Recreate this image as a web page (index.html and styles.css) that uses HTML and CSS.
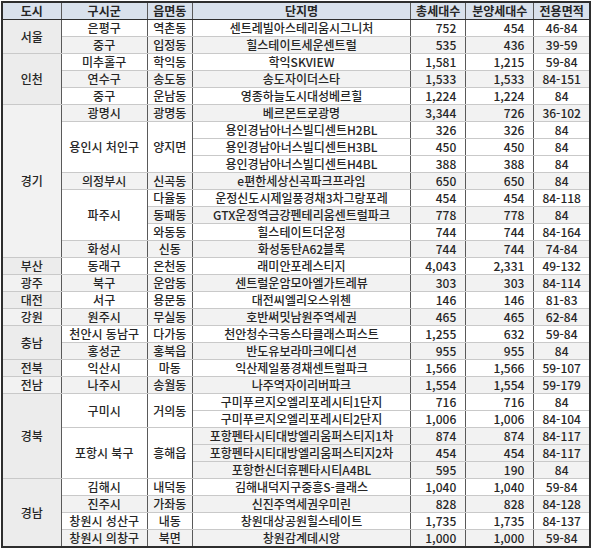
FILE: index.html
```html
<!DOCTYPE html>
<html lang="ko">
<head>
    <meta charset="UTF-8">
    <meta name="viewport" content="width=device-width, initial-scale=1.0">
    <title>분양 단지 목록</title>
    <link rel="stylesheet" href="styles.css">
</head>
<body>
    <div class="wrap">
        <table class="supply">
            <colgroup>
                <col class="c-city">
                <col class="c-gu">
                <col class="c-dong">
                <col class="c-name">
                <col class="c-total">
                <col class="c-sale">
                <col class="c-area">
            </colgroup>
            <thead>
                <tr>
                    <th>도시</th>
                    <th>구시군</th>
                    <th>읍면동</th>
                    <th>단지명</th>
                    <th>총세대수</th>
                    <th>분양세대수</th>
                    <th>전용면적</th>
                </tr>
            </thead>
            <tbody>
                <tr class="grp">
                    <td class="city" rowspan="2">서울</td>
                    <td>은평구</td><td>역촌동</td><td>센트레빌아스테리움시그니처</td>
                    <td class="num">752</td><td class="num">454</td><td>46-84</td>
                </tr>
                <tr class="alt">
                    <td>중구</td><td>입정동</td><td>힐스테이트세운센트럴</td>
                    <td class="num">535</td><td class="num">436</td><td>39-59</td>
                </tr>

                <tr class="grp">
                    <td class="city" rowspan="3">인천</td>
                    <td>미추홀구</td><td>학익동</td><td>학익SKVIEW</td>
                    <td class="num">1,581</td><td class="num">1,215</td><td>59-84</td>
                </tr>
                <tr class="alt">
                    <td>연수구</td><td>송도동</td><td>송도자이더스타</td>
                    <td class="num">1,533</td><td class="num">1,533</td><td>84-151</td>
                </tr>
                <tr>
                    <td>중구</td><td>운남동</td><td>영종하늘도시대성베르힐</td>
                    <td class="num">1,224</td><td class="num">1,224</td><td>84</td>
                </tr>

                <tr class="grp alt">
                    <td class="city" rowspan="9">경기</td>
                    <td>광명시</td><td>광명동</td><td>베르몬트로광명</td>
                    <td class="num">3,344</td><td class="num">726</td><td>36-102</td>
                </tr>
                <tr>
                    <td class="merged" rowspan="3">용인시 처인구</td><td class="merged" rowspan="3">양지면</td>
                    <td>용인경남아너스빌디센트H2BL</td>
                    <td class="num">326</td><td class="num">326</td><td>84</td>
                </tr>
                <tr>
                    <td>용인경남아너스빌디센트H3BL</td>
                    <td class="num">450</td><td class="num">450</td><td>84</td>
                </tr>
                <tr>
                    <td>용인경남아너스빌디센트H4BL</td>
                    <td class="num">388</td><td class="num">388</td><td>84</td>
                </tr>
                <tr class="alt">
                    <td>의정부시</td><td>신곡동</td><td>e편한세상신곡파크프라임</td>
                    <td class="num">650</td><td class="num">650</td><td>84</td>
                </tr>
                <tr>
                    <td class="merged" rowspan="3">파주시</td><td>다율동</td>
                    <td>운정신도시제일풍경채3차그랑포레</td>
                    <td class="num">454</td><td class="num">454</td><td>84-118</td>
                </tr>
                <tr class="alt">
                    <td>동패동</td><td>GTX운정역금강펜테리움센트럴파크</td>
                    <td class="num">778</td><td class="num">778</td><td>84</td>
                </tr>
                <tr>
                    <td>와동동</td><td>힐스테이트더운정</td>
                    <td class="num">744</td><td class="num">744</td><td>84-164</td>
                </tr>
                <tr class="alt">
                    <td>화성시</td><td>신동</td><td>화성동탄A62블록</td>
                    <td class="num">744</td><td class="num">744</td><td>74-84</td>
                </tr>

                <tr class="grp">
                    <td class="city">부산</td>
                    <td>동래구</td><td>온천동</td><td>래미안포레스티지</td>
                    <td class="num">4,043</td><td class="num">2,331</td><td>49-132</td>
                </tr>
                <tr class="grp alt">
                    <td class="city">광주</td>
                    <td>북구</td><td>운암동</td><td>센트럴운암모아엘가트레뷰</td>
                    <td class="num">303</td><td class="num">303</td><td>84-114</td>
                </tr>
                <tr class="grp">
                    <td class="city">대전</td>
                    <td>서구</td><td>용문동</td><td>대전씨엘리오스위첸</td>
                    <td class="num">146</td><td class="num">146</td><td>81-83</td>
                </tr>
                <tr class="grp alt">
                    <td class="city">강원</td>
                    <td>원주시</td><td>무실동</td><td>호반써밋남원주역세권</td>
                    <td class="num">465</td><td class="num">465</td><td>62-84</td>
                </tr>

                <tr class="grp">
                    <td class="city" rowspan="2">충남</td>
                    <td>천안시 동남구</td><td>다가동</td><td>천안청수극동스타클래스퍼스트</td>
                    <td class="num">1,255</td><td class="num">632</td><td>59-84</td>
                </tr>
                <tr class="alt">
                    <td>홍성군</td><td>홍북읍</td><td>반도유보라마크에디션</td>
                    <td class="num">955</td><td class="num">955</td><td>84</td>
                </tr>

                <tr class="grp">
                    <td class="city">전북</td>
                    <td>익산시</td><td>마동</td><td>익산제일풍경채센트럴파크</td>
                    <td class="num">1,566</td><td class="num">1,566</td><td>59-107</td>
                </tr>
                <tr class="grp alt">
                    <td class="city">전남</td>
                    <td>나주시</td><td>송월동</td><td>나주역자이리버파크</td>
                    <td class="num">1,554</td><td class="num">1,554</td><td>59-179</td>
                </tr>

                <tr class="grp">
                    <td class="city" rowspan="5">경북</td>
                    <td class="merged" rowspan="2">구미시</td><td class="merged" rowspan="2">거의동</td>
                    <td>구미푸르지오엘리포레시티1단지</td>
                    <td class="num">716</td><td class="num">716</td><td>84</td>
                </tr>
                <tr>
                    <td>구미푸르지오엘리포레시티2단지</td>
                    <td class="num">1,006</td><td class="num">1,006</td><td>84-104</td>
                </tr>
                <tr class="alt">
                    <td class="merged" rowspan="3">포항시 북구</td><td class="merged" rowspan="3">흥해읍</td>
                    <td>포항펜타시티대방엘리움퍼스티지1차</td>
                    <td class="num">874</td><td class="num">874</td><td>84-117</td>
                </tr>
                <tr class="alt">
                    <td>포항펜타시티대방엘리움퍼스티지2차</td>
                    <td class="num">454</td><td class="num">454</td><td>84-117</td>
                </tr>
                <tr class="alt">
                    <td>포항한신더휴펜타시티A4BL</td>
                    <td class="num">595</td><td class="num">190</td><td>84</td>
                </tr>

                <tr class="grp">
                    <td class="city" rowspan="4">경남</td>
                    <td>김해시</td><td>내덕동</td><td>김해내덕지구중흥S-클래스</td>
                    <td class="num">1,040</td><td class="num">1,040</td><td>59-84</td>
                </tr>
                <tr class="alt">
                    <td>진주시</td><td>가좌동</td><td>신진주역세권우미린</td>
                    <td class="num">828</td><td class="num">828</td><td>84-128</td>
                </tr>
                <tr>
                    <td>창원시 성산구</td><td>내동</td><td>창원대상공원힐스테이트</td>
                    <td class="num">1,735</td><td class="num">1,735</td><td>84-137</td>
                </tr>
                <tr class="alt">
                    <td>창원시 의창구</td><td>북면</td><td>창원감계데시앙</td>
                    <td class="num">1,000</td><td class="num">1,000</td><td>59-84</td>
                </tr>
            </tbody>
        </table>
    </div>
</body>
</html>
```

FILE: styles.css
```css
body {
    margin: 0;
    padding: 0;
    background-color: #ffffff;
    font-family: "Noto Sans CJK KR", "Noto Sans", sans-serif;
    color: #262626;
}
.wrap {
    padding: 1px;
}
.supply {
    width: 590px;
    table-layout: fixed;
    border-collapse: collapse;
    border: 2px solid #2e2e2e;
    font-size: 12px;
    font-weight: 500;
}
.supply .c-city { width: 59px; }
.supply .c-gu { width: 86px; }
.supply .c-dong { width: 45px; }
.supply .c-name { width: 218px; }
.supply .c-total { width: 55px; }
.supply .c-sale { width: 68px; }
.supply .c-area { width: 56px; }
.supply th,
.supply td {
    height: 16px;
    padding: 0 4px;
    line-height: 16px;
    text-align: center;
    white-space: nowrap;
    overflow: hidden;
    border-left: 1px solid #5a5a5a;
    border-right: 1px solid #5a5a5a;
    border-top: 1px solid #c9c9c9;
    border-bottom: 1px solid #c9c9c9;
}
.supply th {
    background-color: #d9e1ec;
    font-weight: bold;
    border-bottom: 1px solid #2e2e2e;
}
.supply tr.alt td {
    background-color: #f2f2f2;
}
.supply td.city {
    background-color: #ececec;
}
.supply tr.alt td.merged,
.supply td.merged {
    background-color: #ffffff;
}
.supply tr.grp td {
    border-top: 1px solid #2e2e2e;
}
.supply td.num {
    text-align: right;
    padding-right: 9px;
}
```
